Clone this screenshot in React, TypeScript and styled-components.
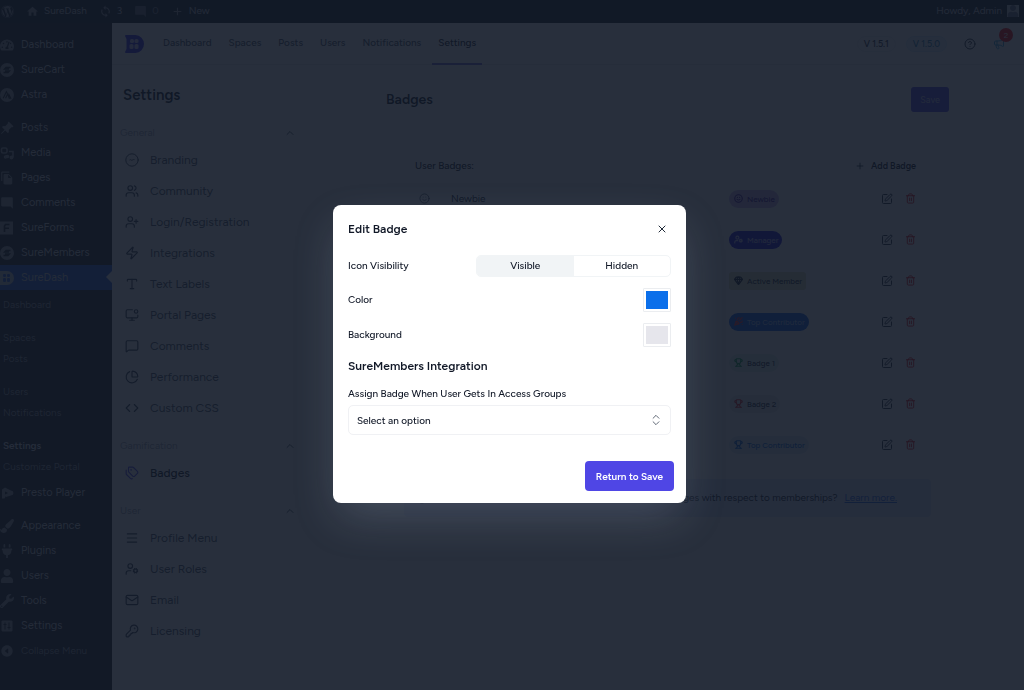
import React from "react";
import styled, { createGlobalStyle } from "styled-components";
import {
  Users, UserPlus, Zap, Type, MonitorDot, MessageSquare, PieChart, Code, Tags,
  Menu, UserCog, Mail, KeyRound, ChevronUp, ChevronsUpDown, X, Plus, SquarePen, Trash2,
  CircleHelp, Megaphone, Smile, Gem, PartyPopper, Trophy, Info,
} from "lucide-react";
import { FaWordpress, FaTachometerAlt, FaPaintBrush, FaPlug, FaUser, FaWrench } from "react-icons/fa";
import { MdHome, MdSync, MdModeComment, MdAdd, MdFileCopy } from "react-icons/md";
import { BsPinAngleFill } from "react-icons/bs";
import { IoCaretBackCircle } from "react-icons/io5";

const font = `Figtree, Inter, "Liberation Sans", sans-serif`;

const GlobalStyle = createGlobalStyle`
  * { box-sizing: border-box; }
  body { margin: 0; background: #ffffff; font-family: ${font}; color: #111827; }
  button, input, select { font-family: inherit; margin: 0; }
  a { color: inherit; text-decoration: none; }
  h1, h2, h3, p { margin: 0; }
`;

const Page = styled.div`
  display: flex;
  flex-direction: column;
  height: 100vh;
  overflow: hidden;
`;

/* ---------- admin bar ---------- */
const AdminBar = styled.header`
  display: flex;
  align-items: center;
  justify-content: space-between;
  flex: none;
  height: 23px;
  padding: 0 5px 1px 1px;
  background: #1d2327;
  color: #c3c6ca;
  font-size: 10px;
  line-height: 16px;
`;
const BarGroup = styled.div`
  display: flex;
  align-items: center;
  gap: 12px;
`;
const BarItem = styled.a<{ $dim?: boolean }>`
  display: flex;
  align-items: center;
  gap: 5px;
  opacity: ${(p) => (p.$dim ? 0.6 : 1)};
  svg { width: 13px; height: 13px; color: #94989c; }
`;
const Avatar = styled.span`
  display: flex;
  width: 12px;
  height: 12px;
  background: #c3c6ca;
  svg { width: 12px; height: 12px; color: #6b7280; }
`;

const Body = styled.div`
  display: flex;
  flex: 1;
  min-height: 0;
`;

/* ---------- admin menu ---------- */
const AdminMenu = styled.nav`
  flex: none;
  width: 112px;
  padding-top: 9px;
  background: #1e1e1e;
  font-size: 11px;
  line-height: 16px;
  overflow: hidden;
`;
const MenuItem = styled.a<{ $active?: boolean; $dim?: boolean }>`
  position: relative;
  display: flex;
  align-items: center;
  gap: 7px;
  height: 25px;
  white-space: nowrap;
  font-size: ${(p) => (p.$dim ? 10 : 11)}px;
  color: ${(p) => (p.$dim ? "#94989c" : "#d0d2d5")};
  background: ${(p) => (p.$active ? "#2a5ed0" : "transparent")};
  svg { flex: none; width: 14px; height: 14px; color: ${(p) => (p.$active ? "#c3c6ca" : "#94989c")}; }
  &::after {
    content: "";
    display: ${(p) => (p.$active ? "block" : "none")};
    position: absolute;
    right: 0;
    top: 6px;
    border: 6px solid transparent;
    border-right-color: #ffffff;
    border-left-width: 0;
  }
`;
const MenuGap = styled.div`
  height: 8px;
`;
const SubMenu = styled.div`
  padding: 4px 3px 3px;
  font-size: 10px;
`;
const SubItem = styled.a<{ $current?: boolean; $spaced?: boolean }>`
  display: flex;
  align-items: center;
  height: 21px;
  margin-top: ${(p) => (p.$spaced ? 12 : 0)}px;
  color: ${(p) => (p.$current ? "#d5d8dc" : "#94989c")};
  font-weight: ${(p) => (p.$current ? 600 : 400)};
`;

/* ---------- app shell ---------- */
const Shell = styled.div`
  display: flex;
  flex-direction: column;
  flex: 1;
  min-width: 0;
  background: #ffffff;
`;
const TopNav = styled.div`
  display: flex;
  align-items: center;
  justify-content: space-between;
  height: 42px;
  padding: 0 19px 0 13px;
  border-bottom: 1px solid #e5e7eb;
`;
const NavLeft = styled.div`
  display: flex;
  align-items: center;
  gap: 13px;
  height: 42px;
`;
const NavLinks = styled.nav`
  display: flex;
  height: 42px;
  gap: 5px;
`;
const NavLink = styled.a<{ $active?: boolean }>`
  display: flex;
  align-items: center;
  padding: 0 6px;
  font-size: 10px;
  line-height: 16px;
  font-weight: 500;
  color: ${(p) => (p.$active ? "#111827" : "#4b5563")};
  border-bottom: 2px solid ${(p) => (p.$active ? "#6f68d8" : "transparent")};
`;
const NavRight = styled.div`
  display: flex;
  align-items: center;
  gap: 17px;
`;
const Versions = styled.div`
  display: flex;
  gap: 10px;
`;
const Version = styled.span<{ $tone: "plain" | "sky" }>`
  padding: 0 6px;
  border: 1px solid ${(p) => (p.$tone === "sky" ? "#d3ecfb" : "#eceef1")};
  border-radius: 8px;
  background: ${(p) => (p.$tone === "sky" ? "#eaf5fc" : "#f9fafb")};
  color: ${(p) => (p.$tone === "sky" ? "#2b7cab" : "#1f2937")};
  font-size: 9px;
  line-height: 14px;
  font-weight: 500;
`;
const IconButton = styled.button<{ $color?: string }>`
  position: relative;
  display: flex;
  padding: 0;
  border: 0;
  background: none;
  color: ${(p) => p.$color ?? "#1f2937"};
`;
const Count = styled.span`
  position: absolute;
  left: 6px;
  bottom: 8px;
  width: 14px;
  height: 14px;
  border-radius: 7px;
  background: #ff0000;
  color: #ffffff;
  font-size: 8px;
  line-height: 14px;
  text-align: center;
`;

const Content = styled.div`
  display: flex;
  flex: 1;
  min-height: 0;
`;

/* ---------- settings sidebar ---------- */
const SettingsPanel = styled.aside`
  flex: none;
  width: 193px;
  padding: 18px 8px 0;
`;
const PanelTitle = styled.h1`
  padding: 0 3px;
  font-size: 15px;
  line-height: 24px;
  font-weight: 600;
  color: #111827;
`;
const Group = styled.section`
  margin-top: 10px;
  &:first-of-type { margin-top: 14px; }
`;
const GroupHeader = styled.button`
  display: flex;
  align-items: center;
  justify-content: space-between;
  width: 100%;
  height: 24px;
  padding: 0 1px 0 0;
  border: 0;
  background: none;
  color: #9ca3af;
  font-size: 10px;
  line-height: 16px;
  svg { color: #4b5563; }
`;
const GroupLink = styled.a<{ $active?: boolean }>`
  display: flex;
  align-items: center;
  gap: 11px;
  height: 31px;
  padding: 0 0 1px 5px;
  font-size: 12px;
  line-height: 16px;
  color: ${(p) => (p.$active ? "#111827" : "#4b5563")};
  font-weight: ${(p) => (p.$active ? 500 : 400)};
  svg { color: ${(p) => (p.$active ? "#4f46e5" : "#374151")}; }
`;

/* ---------- badges page ---------- */
const Main = styled.main`
  flex: 1;
  min-width: 0;
  padding: 22px 75px 0 81px;
`;
const MainHeader = styled.div`
  display: flex;
  align-items: center;
  justify-content: space-between;
  height: 25px;
  h2 { font-size: 14px; line-height: 24px; font-weight: 600; }
`;
const SaveButton = styled.button`
  height: 25px;
  padding: 0 9px;
  border: 0;
  border-radius: 3px;
  background: #4f46e5;
  color: #c4c1f5;
  font-size: 9px;
  font-weight: 500;
`;
const Card = styled.section`
  margin-top: 42px;
  padding: 0 18px;
`;
const CardHeader = styled.div`
  display: flex;
  align-items: center;
  justify-content: space-between;
  height: 24px;
  padding: 0 15px 1px 11px;
  font-size: 10px;
  font-weight: 500;
`;
const AddButton = styled.button`
  display: flex;
  align-items: center;
  gap: 6px;
  padding: 0;
  border: 0;
  background: none;
  color: #111827;
  font-size: 9px;
  font-weight: 600;
`;
const BadgeTable = styled.table`
  width: 100%;
  border-collapse: collapse;
  font-size: 10px;
  td { height: 41px; padding: 0; vertical-align: middle; }
  td:nth-child(1) { width: 47px; padding-left: 15px; }
  td:nth-child(3) { width: 152px; }
  td:nth-child(4) { width: 50px; }
  svg { display: block; }
`;
const Pill = styled.span<{ $bg: string; $fg: string; $square?: boolean }>`
  display: inline-flex;
  align-items: center;
  gap: 4px;
  height: 18px;
  padding: 0 4px 0 5px;
  border-radius: ${(p) => (p.$square ? 3 : 9)}px;
  background: ${(p) => p.$bg};
  color: ${(p) => p.$fg};
  font-size: 8px;
  line-height: 16px;
  font-weight: 500;
  vertical-align: middle;
`;
const Actions = styled.div`
  display: flex;
  align-items: center;
  gap: 12px;
`;
const Notice = styled.div`
  display: flex;
  align-items: center;
  gap: 7px;
  height: 38px;
  margin-top: 14px;
  padding: 0 34px 0 12px;
  border-radius: 4px;
  background: #e0e7ff;
  font-size: 10px;
  line-height: 16px;
  white-space: nowrap;
  p { flex: 1; text-align: right; }
  a { color: #2563eb; text-decoration: underline; }
`;

/* ---------- dialog ---------- */
const Overlay = styled.div`
  position: fixed;
  inset: 0;
  display: flex;
  align-items: center;
  justify-content: center;
  padding: 18px 5px 0 0;
  background: rgba(17, 24, 39, 0.9);
`;
const Dialog = styled.div`
  width: 353px;
  padding: 15px 15px 12px;
  border-radius: 8px;
  background: #ffffff;
  box-shadow: 0 18px 44px -6px rgba(148, 163, 184, 0.28);
  color: #111827;
  font-size: 10px;
  line-height: 16px;
  font-weight: 500;
`;
const DialogHeader = styled.div`
  display: flex;
  align-items: center;
  justify-content: space-between;
  height: 18px;
  padding-right: 3px;
  margin-bottom: 17px;
`;
const DialogTitle = styled.h2`
  font-size: 12px;
  line-height: 18px;
  font-weight: 600;
`;
const SectionTitle = styled.h3`
  margin-top: 10px;
  font-size: 12px;
  line-height: 18px;
  font-weight: 600;
`;
const Fields = styled.div`
  display: flex;
  flex-direction: column;
  gap: 11px;
`;
const Field = styled.div`
  display: flex;
  align-items: center;
  justify-content: space-between;
`;
const Segmented = styled.div`
  display: flex;
  width: 195px;
  height: 22px;
  border: 1px solid #f1f4f6;
  border-radius: 5px;
  overflow: hidden;
`;
const Segment = styled.label`
  display: flex;
  flex: 1;
  align-items: center;
  justify-content: center;
  input { position: absolute; appearance: none; width: 0; height: 0; }
  &:has(input:checked) { background: #f1f4f6; }
`;
const Swatch = styled.input`
  width: 28px;
  height: 24px;
  padding: 2px;
  border: 1px solid #ebedf0;
  border-radius: 1px;
  background: #ffffff;
  appearance: none;
  &::-webkit-color-swatch-wrapper { padding: 0; }
  &::-webkit-color-swatch { border: 0; }
`;
const SelectLabel = styled.label`
  display: block;
  margin: 11px 0 3px;
`;
const SelectBox = styled.div`
  position: relative;
  svg { position: absolute; right: 8px; top: 8px; color: #4b5563; pointer-events: none; }
`;
const Select = styled.select`
  display: block;
  width: 100%;
  height: 30px;
  padding: 0 8px;
  border: 1px solid #f0f1f4;
  border-radius: 5px;
  background: #ffffff;
  color: #111827;
  font-size: 10px;
  font-weight: 500;
  appearance: none;
`;
const DialogFooter = styled.div`
  display: flex;
  justify-content: flex-end;
  margin: 26px -3px 0 0;
`;
const PrimaryButton = styled.button`
  height: 30px;
  padding: 0 11px;
  border: 0;
  border-radius: 4px;
  background: #4f46e5;
  color: #ffffff;
  font-size: 10px;
  font-weight: 600;
`;

/* ---------- drawings ---------- */
const SureDashLogo = () => (
  <svg width="19" height="18" viewBox="0 0 19 18" aria-label="SureDash">
    <path d="M1 0h9.500a8.500 9 0 0 1 0 18H1a1 1 0 0 1-1-1l1.500-3V4L0 1a1 1 0 0 1 1-1z" fill="#3b2bea" />
    <g fill="#cfcaf8">
      <rect x="5" y="4" width="4" height="4" rx="1.500" /><rect x="9.500" y="4" width="4" height="4" rx="1.500" />
      <rect x="4.500" y="9" width="4" height="5" rx="1.500" /><rect x="9.500" y="9" width="4" height="5" rx="1.500" />
    </g>
  </svg>
);
const SureDashMark = () => (
  <svg viewBox="0 0 14 14">
    <path d="M0 0h7a7 7 0 0 1 0 14H0z" fill="currentColor" />
    <g fill="#2a5ed0">
      <rect x="3" y="3" width="3" height="3" rx="1" /><rect x="7" y="3" width="3" height="3" rx="1" />
      <rect x="3" y="7" width="3" height="4" rx="1" /><rect x="7" y="7" width="3" height="4" rx="1" />
    </g>
  </svg>
);
const SureMark = () => (
  <svg viewBox="0 0 14 14">
    <circle cx="7" cy="7" r="7" fill="currentColor" />
    <path d="M10.500 4.500H6L4.500 6H9M3.500 9.500H8L9.500 8H5" fill="none" stroke="#1e1e1e" strokeWidth="1.300" />
  </svg>
);
const AstraMark = () => (
  <svg viewBox="0 0 14 14">
    <circle cx="7" cy="7" r="7" fill="currentColor" />
    <path d="M3.200 10.200 6.400 3.600l1.200 2.300-2 4.300M8 7l1.200 3.200h1.500L8.500 5.800" fill="none" stroke="#1e1e1e" strokeWidth="1.100" />
  </svg>
);
const FormsMark = () => (
  <svg viewBox="0 0 14 14">
    <rect x="0" y="0.500" width="13" height="13" fill="currentColor" />
    <path d="M4.500 11V5l1-1.500h4M4.500 7.300H9" fill="none" stroke="#1e1e1e" strokeWidth="1.600" />
  </svg>
);
const MediaMark = () => (
  <svg viewBox="0 0 14 14" fill="none" stroke="currentColor" strokeWidth="1.600">
    <rect x="1.500" y="2" width="5.500" height="5" rx="1.500" />
    <circle cx="5.500" cy="11" r="1" /><path d="M6.500 11V9M9 5.500h4v6" />
    <circle cx="11.500" cy="11.500" r="1.200" fill="currentColor" /><circle cx="7.500" cy="10.500" r="1" fill="currentColor" />
  </svg>
);
const PrestoMark = () => (
  <svg viewBox="0 0 14 14">
    <path d="M2 3.500 5 1.500l6 3a2.500 2.500 0 0 1 0 5L6 11v-1L4.500 12.500H2z" fill="currentColor" />
    <path d="M5 5.500v3l3-1.500z" fill="#1e1e1e" />
  </svg>
);
const SettingsMark = () => (
  <svg viewBox="0 0 14 14">
    <rect x="1.500" y="1.500" width="11" height="11" rx="1" fill="currentColor" />
    <path d="M5 3.500v7M9 3.500v7M3.500 5.500h3M7.500 8.500h3" stroke="#1e1e1e" strokeWidth="1" />
  </svg>
);
const BrandingIcon = ({ size = 14 }: { size?: number; strokeWidth?: number }) => (
  <svg width={size} height={size} viewBox="0 0 14 14" fill="none" stroke="currentColor" strokeLinecap="round">
    <circle cx="7" cy="7" r="6.200" /><path d="M4.800 6.800c.8-.8 1.500.8 2.300.4s1-.8 2-.6" />
  </svg>
);

const groups = [
  {
    name: "General",
    items: [
      { icon: BrandingIcon, label: "Branding" }, { icon: Users, label: "Community" },
      { icon: UserPlus, label: "Login/Registration" }, { icon: Zap, label: "Integrations" },
      { icon: Type, label: "Text Labels" }, { icon: MonitorDot, label: "Portal Pages" },
      { icon: MessageSquare, label: "Comments" }, { icon: PieChart, label: "Performance" },
      { icon: Code, label: "Custom CSS" },
    ],
  },
  { name: "Gamification", items: [{ icon: Tags, label: "Badges" }] },
  {
    name: "User",
    items: [
      { icon: Menu, label: "Profile Menu" }, { icon: UserCog, label: "User Roles" },
      { icon: Mail, label: "Email" }, { icon: KeyRound, label: "Licensing" },
    ],
  },
];

const badges = [
  { icon: Smile, title: "Newbie", name: "Newbie", bg: "#c9b0ec", fg: "#3b0a8f", tint: "#3b0a8f" },
  { icon: UserCog, name: "Manager", bg: "#1a0fd6", fg: "#b9b6f5", tint: "#b9b6f5" },
  { icon: Gem, name: "Active Member", bg: "#dde0b4", fg: "#1f2937", tint: "#111827", square: true },
  { icon: PartyPopper, name: "Top Contributor", bg: "#0a5bea", fg: "#9cc0fa", tint: "#ff2d2d" },
  { icon: Trophy, name: "Badge 1", bg: "#e0f2ea", fg: "#1f2937", tint: "#16a34a" },
  { icon: Trophy, name: "Badge 2", bg: "#e6ecec", fg: "#1f2937", tint: "#dc2626" },
  { icon: Trophy, name: "Top Contributor", bg: "#d9ecf5", fg: "#0b62d6", tint: "#0b62d6" },
];

const navItems = ["Dashboard", "Spaces", "Posts", "Users", "Notifications", "Settings"];

export default function App() {
  return (
    <>
      <GlobalStyle />
      <Page>
        <AdminBar>
          <BarGroup>
            <BarItem href="#" aria-label="WordPress"><FaWordpress /></BarItem>
            <BarItem href="#"><MdHome />SureDash</BarItem>
            <BarItem href="#"><MdSync />3</BarItem>
            <BarItem href="#" $dim><MdModeComment />0</BarItem>
            <BarItem href="#"><MdAdd />New</BarItem>
          </BarGroup>
          <BarItem href="#">Howdy, Admin<Avatar><FaUser /></Avatar></BarItem>
        </AdminBar>
        <Body>
          <AdminMenu aria-label="Admin">
            <MenuItem href="#"><FaTachometerAlt />Dashboard</MenuItem>
            <MenuItem href="#"><SureMark />SureCart</MenuItem>
            <MenuItem href="#"><AstraMark />Astra</MenuItem>
            <MenuGap />
            <MenuItem href="#"><BsPinAngleFill />Posts</MenuItem>
            <MenuItem href="#"><MediaMark />Media</MenuItem>
            <MenuItem href="#"><MdFileCopy />Pages</MenuItem>
            <MenuItem href="#"><MdModeComment />Comments</MenuItem>
            <MenuItem href="#"><FormsMark />SureForms</MenuItem>
            <MenuItem href="#"><SureMark />SureMembers</MenuItem>
            <MenuItem href="#" $active><SureDashMark />SureDash</MenuItem>
            <SubMenu>
              <SubItem href="#">Dashboard</SubItem>
              <SubItem href="#" $spaced>Spaces</SubItem>
              <SubItem href="#">Posts</SubItem>
              <SubItem href="#" $spaced>Users</SubItem>
              <SubItem href="#">Notifications</SubItem>
              <SubItem href="#" $spaced $current>Settings</SubItem>
              <SubItem href="#">Customize Portal</SubItem>
            </SubMenu>
            <MenuItem href="#"><PrestoMark />Presto Player</MenuItem>
            <MenuGap />
            <MenuItem href="#"><FaPaintBrush />Appearance</MenuItem>
            <MenuItem href="#"><FaPlug />Plugins</MenuItem>
            <MenuItem href="#"><FaUser />Users</MenuItem>
            <MenuItem href="#"><FaWrench />Tools</MenuItem>
            <MenuItem href="#"><SettingsMark />Settings</MenuItem>
            <MenuItem href="#" $dim><IoCaretBackCircle />Collapse Menu</MenuItem>
          </AdminMenu>
          <Shell>
            <TopNav>
              <NavLeft>
                <SureDashLogo />
                <NavLinks>
                  {navItems.map((n) => (
                    <NavLink href="#" key={n} $active={n === "Settings"}>{n}</NavLink>
                  ))}
                </NavLinks>
              </NavLeft>
              <NavRight>
                <Versions>
                  <Version $tone="plain">V 1.5.1</Version>
                  <Version $tone="sky">V 1.5.0</Version>
                </Versions>
                <IconButton aria-label="Help"><CircleHelp size={12} /></IconButton>
                <IconButton aria-label="What's new" $color="#38a3d8">
                  <Megaphone size={12} />
                  <Count>2</Count>
                </IconButton>
              </NavRight>
            </TopNav>
            <Content>
              <SettingsPanel>
                <PanelTitle>Settings</PanelTitle>
                {groups.map((g) => (
                  <Group key={g.name}>
                    <GroupHeader>{g.name}<ChevronUp size={12} /></GroupHeader>
                    {g.items.map(({ icon: Icon, label }) => (
                      <GroupLink href="#" key={label} $active={label === "Badges"}>
                        <Icon size={14} strokeWidth={2} />{label}
                      </GroupLink>
                    ))}
                  </Group>
                ))}
              </SettingsPanel>
              <Main>
                <MainHeader>
                  <h2>Badges</h2>
                  <SaveButton>Save</SaveButton>
                </MainHeader>
                <Card>
                  <CardHeader>
                    User Badges:
                    <AddButton><Plus size={10} />Add Badge</AddButton>
                  </CardHeader>
                  <BadgeTable>
                    <tbody>
                      {badges.map(({ icon: Icon, ...b }, i) => (
                        <tr key={i}>
                          <td><Icon size={11} color="#4b5563" /></td>
                          <td>{b.title}</td>
                          <td>
                            <Pill $bg={b.bg} $fg={b.fg} $square={b.square}>
                              <Icon size={9} strokeWidth={3} color={b.tint} />{b.name}
                            </Pill>
                          </td>
                          <td>
                            <Actions>
                              <IconButton aria-label={`Edit ${b.name}`}><SquarePen size={12} /></IconButton>
                              <IconButton aria-label={`Delete ${b.name}`} $color="#e00000"><Trash2 size={11} /></IconButton>
                            </Actions>
                          </td>
                        </tr>
                      ))}
                    </tbody>
                  </BadgeTable>
                  <Notice>
                    <Info size={12} />
                    <p>Want to automatically assign user badges with respect to memberships?</p>
                    <a href="#">Learn more.</a>
                  </Notice>
                </Card>
              </Main>
            </Content>
          </Shell>
        </Body>
      </Page>
      <Overlay>
        <Dialog role="dialog" aria-modal="true" aria-labelledby="dialog-title">
          <DialogHeader>
            <DialogTitle id="dialog-title">Edit Badge</DialogTitle>
            <IconButton aria-label="Close"><X size={12} /></IconButton>
          </DialogHeader>
          <Fields>
            <Field role="radiogroup" aria-labelledby="visibility-label">
              <span id="visibility-label">Icon Visibility</span>
              <Segmented>
                <Segment><input type="radio" name="visibility" defaultChecked />Visible</Segment>
                <Segment><input type="radio" name="visibility" />Hidden</Segment>
              </Segmented>
            </Field>
            <Field>
              <label htmlFor="badge-color">Color</label>
              <Swatch id="badge-color" type="color" defaultValue="#0b6fea" />
            </Field>
            <Field>
              <label htmlFor="badge-background">Background</label>
              <Swatch id="badge-background" type="color" defaultValue="#e6e6ec" />
            </Field>
          </Fields>
          <SectionTitle>SureMembers Integration</SectionTitle>
          <SelectLabel htmlFor="access-group">Assign Badge When User Gets In Access Groups</SelectLabel>
          <SelectBox>
            <Select id="access-group"><option>Select an option</option></Select>
            <ChevronsUpDown size={14} strokeWidth={1.5} />
          </SelectBox>
          <DialogFooter>
            <PrimaryButton>Return to Save</PrimaryButton>
          </DialogFooter>
        </Dialog>
      </Overlay>
    </>
  );
}
